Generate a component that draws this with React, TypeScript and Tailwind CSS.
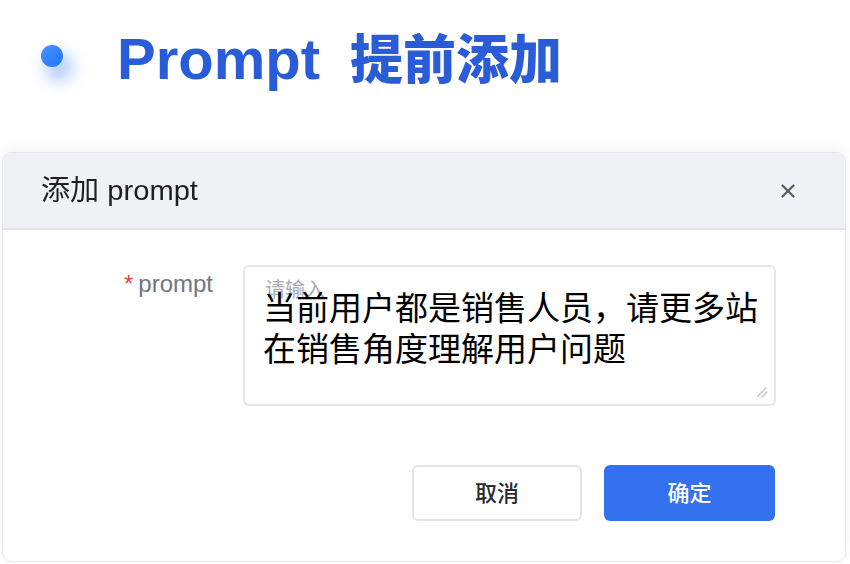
import { X } from "lucide-react";

const CJK = "font-['Liberation_Sans','Noto_Sans_CJK_SC',sans-serif]";

function Heading() {
  return (
    <div className="flex items-center h-[112px] pl-[41px]">
      <div className="relative w-[22px] h-[22px]">
        <div className="absolute left-[4px] top-[8px] w-[28px] h-[28px] rounded-full bg-[#3b82f6]/40 blur-[8px]" />
        <div className="relative w-[22px] h-[22px] rounded-full bg-[linear-gradient(135deg,#4b94ff,#1f74ff)]" />
      </div>
      <h1
        className={`ml-[54px] mt-[6px] flex items-baseline text-[58px] font-bold leading-none text-[#2a5cd8] ${CJK}`}
      >
        <span>Prompt</span>
        <span className="ml-[30px] text-[53px] font-['Noto_Sans_CJK_SC',sans-serif] font-black">提前添加</span>
      </h1>
    </div>
  );
}

export default function App() {
  return (
    <div className={`w-[850px] h-[564px] overflow-hidden bg-white ${CJK}`}>
      <Heading />
      <div className="pt-[40px] pl-[2px] pr-[4px]">
        <div className="h-[410px] rounded-[9px] border border-[#e8e9ec] bg-white shadow-[0_-6px_14px_rgba(0,0,0,0.04)] overflow-hidden">
          {/* header */}
          <div className="h-[77px] flex items-center justify-between pl-[38px] pr-[46px] bg-[#f0f1f5] border-b-2 border-[#e3e5ea]">
            <span className="text-[28px] text-[#1f1f1f] scale-x-[1.04] origin-left">添加 prompt</span>
            <X className="w-[22px] h-[22px] text-[#5b5f66]" strokeWidth={2.5} />
          </div>

          {/* body */}
          <div className="flex pt-[35px]">
            <div className="w-[210px] text-right pt-[1px] text-[24px] text-[#71767e]">
              <span className="text-[#e5453b] mr-[5px]">*</span>prompt
            </div>
            <div className="relative ml-[30px] w-[533px] h-[141px] rounded-[6px] border-2 border-[#e4e6eb] bg-white">
              <div className="absolute left-[20px] top-[8px] text-[20px] text-[#a8abb2]">请输入</div>
              <div className="absolute left-[18px] top-[19px] w-[510px] text-[33px] leading-[41px] text-black font-['Noto_Sans_CJK_SC',sans-serif]">
                当前用户都是销售人员，请更多站在销售角度理解用户问题
              </div>
              <svg className="absolute right-[6px] bottom-[6px]" width="12" height="12" viewBox="0 0 12 12">
                <path d="M2 10 L10 2 M6 11 L11 6" stroke="#b8bcc4" strokeWidth="1.2" strokeLinecap="round" />
              </svg>
            </div>
          </div>

          {/* footer */}
          <div className="flex justify-end gap-[22px] pr-[70px] pt-[59px]">
            <button className="w-[170px] h-[56px] rounded-[6px] border-2 border-[#e3e4e7] bg-white text-[22px] text-[#2a2a2a] font-medium">
              取消
            </button>
            <button className="w-[171px] h-[56px] rounded-[6px] bg-[#3371ee] text-[22px] text-white font-medium">
              确定
            </button>
          </div>
        </div>
      </div>
    </div>
  );
}
